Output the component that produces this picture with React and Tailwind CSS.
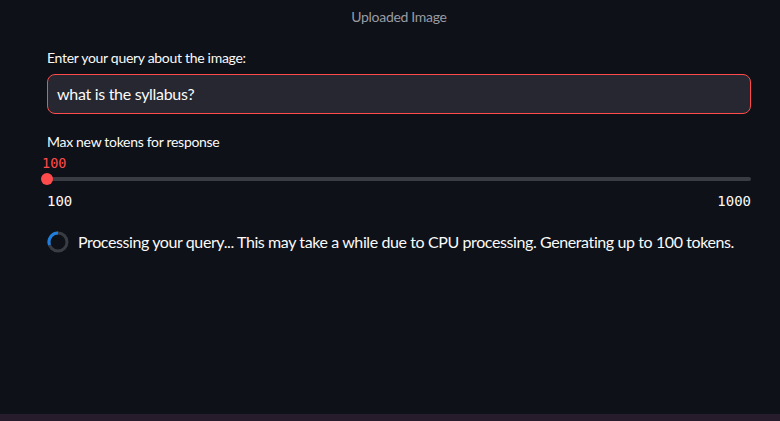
import React from 'react'

const Spinner = () => (
  <svg width="22" height="22" viewBox="0 0 22 22" className="shrink-0">
    <circle cx="11" cy="11" r="9" fill="none" stroke="#3a3c44" strokeWidth="3" />
    <path d="M2.5 14 A9 9 0 0 1 11 2" fill="none" stroke="#1f7fe0" strokeWidth="3" />
  </svg>
)

const App = () => {
  return (
    <div className="h-[421px] w-[780px] bg-[#0e1117] flex flex-col text-[#fafafa] font-['Lato','Liberation_Sans',sans-serif] overflow-hidden">
      <div className="flex-1 pl-[47px] pr-[29px]">
        <p className="text-center text-[14px] text-[#9a9ca4] pt-[7px] leading-[20px] tracking-[-0.3px]">Uploaded Image</p>

        <label className="block mt-[21px] text-[14px] leading-[20px] tracking-[-0.3px]">Enter your query about the image:</label>
        <div className="mt-[6px] h-[40px] rounded-[8px] border border-[#ff4b4b] bg-[#262730] flex items-center px-[9px] text-[16px] tracking-[-0.3px]">
          what is the syllabus?
        </div>

        <label className="block mt-[18px] text-[14px] leading-[20px] tracking-[-0.3px]">Max new tokens for response</label>
        <div className="relative h-[40px]">
          <span className="absolute left-[-5px] top-[2px] font-['DejaVu_Sans_Mono',monospace] text-[13.5px] text-[#ff4b4b] leading-[18px]">100</span>
          <div className="absolute left-0 right-0 top-[25px] h-[4px] rounded bg-[#3a3c44]" />
          <div className="absolute left-[-6px] top-[21px] w-[12px] h-[12px] rounded-full bg-[#ff4b4b]" />
        </div>
        <div className="flex justify-between font-['DejaVu_Sans_Mono',monospace] text-[14px] leading-[18px]">
          <span>100</span>
          <span>1000</span>
        </div>

        <div className="flex items-center gap-[9px] mt-[20px]">
          <Spinner />
          <span className="text-[16px] whitespace-nowrap tracking-[-0.4px]">Processing your query... This may take a while due to CPU processing. Generating up to 100 tokens.</span>
        </div>
      </div>
      <div className="h-[7px] bg-[#271c2c]" />
    </div>
  )
}

export default App
